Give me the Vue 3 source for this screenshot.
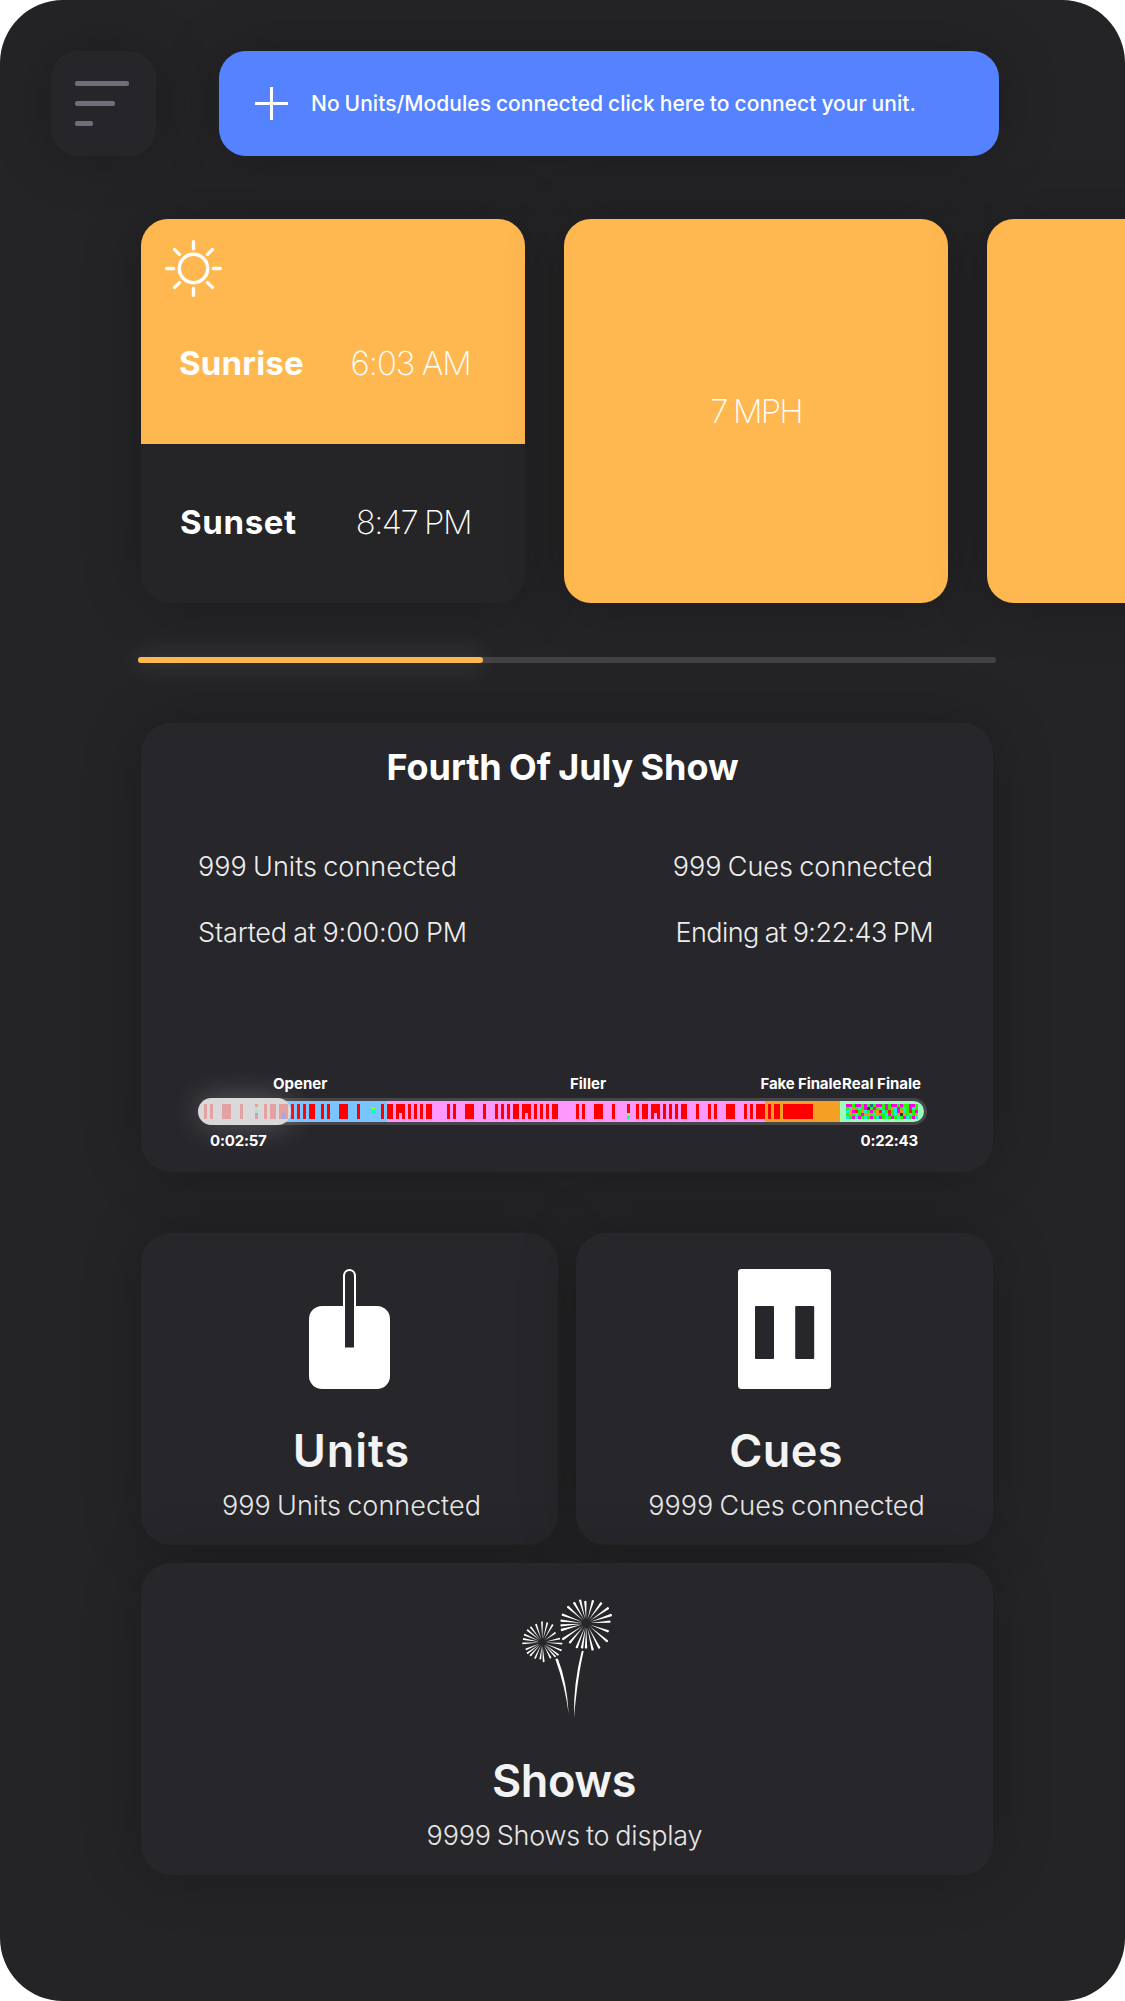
<script setup>
// x, width of each cue mark along the show timeline
const playedCues = [[6, 3], [12, 3], [24, 9], [42, 3], [66, 3], [72, 6], [81, 9]]
const cues = [
  [93, 3], [99, 3], [105, 3], [111, 6], [123, 3], [129, 3], [141, 9], [159, 3],
  [183, 3], [189, 6], [198, 9], [210, 3], [216, 3], [222, 3], [228, 6], [249, 3],
  [255, 3], [267, 9], [285, 3], [297, 3], [303, 3], [309, 3], [315, 6], [324, 9],
  [336, 3], [342, 3], [348, 3], [354, 6], [378, 3], [384, 3], [396, 9], [414, 3],
  [429, 3], [438, 3], [444, 6], [453, 9], [465, 3], [471, 3], [477, 3], [483, 6],
  [498, 3], [510, 3], [516, 3], [528, 9], [546, 3], [552, 3], [558, 9], [570, 3],
  [576, 6], [585, 30],
]

// one letter per 3px cell of the finale pattern
const finale = [
  'mmgmmgmgbgmmgmgmmgmggmmg',
  'gcogcgmpgmgcgmgocmgcgmcg',
  'comrgocgmgorcgrgcmocgrgm',
  'gogcgmoogcoggcmgcokogcgo',
  'cgmcmgcgmgcmgcgmgcgmcgmc',
]
const colors = { m: '#ff00e0', g: '#25f500', c: '#17f0d0', o: '#ff9020', r: '#f51818', b: '#256a90', p: '#7a1d55', k: '#26402a' }

// a firework ray that widens from the burst's centre to a rounded tip
const ray = (cx, cy, [x, y], inner, w) => {
  const a = Math.atan2(y - cy, x - cx)
  const sx = cx + Math.cos(a) * inner
  const sy = cy + Math.sin(a) * inner
  const nx = -Math.sin(a) * w
  const ny = Math.cos(a) * w
  return `M${sx} ${sy}L${x + nx} ${y + ny}Q${x + Math.cos(a) * w} ${y + Math.sin(a) * w} ${x - nx} ${y - ny}Z`
}
const big = [[222, 68], [240, 60], [256, 64], [279, 62], [304, 69], [325, 84], [334, 105], [330, 125], [325, 154], [322, 184], [298, 204], [278, 210], [258, 204], [246, 204], [230, 203], [209, 188], [188, 178], [184, 150], [183, 136], [183, 122], [187, 104], [203, 80]]
const small = [[126, 125], [142, 128], [158, 134], [166, 158], [179, 176], [186, 191], [184, 211], [175, 225], [166, 230], [152, 234], [131, 245], [121, 237], [105, 235], [91, 227], [82, 220], [78, 208], [68, 190], [70, 177], [73, 164], [82, 150], [92, 141], [108, 133]]
const bursts = big.map(p => ray(259, 130, p, 12, 3.6)).join('') + small.map(p => ray(127, 187, p, 10, 2.8)).join('')
</script>

<template>
  <main class="screen">
    <header class="top">
      <button class="menu" aria-label="Menu"><i></i><i></i><i></i></button>
      <div class="banner">
        <svg width="33" height="33" viewBox="0 0 33 33"><path d="M16.5 0v33M0 16.5h33" stroke="#fff" stroke-width="3" /></svg>
        <span class="banner-text">No Units/Modules connected click here to connect your unit.</span>
      </div>
    </header>

    <section class="weather">
      <article class="tile sun">
        <div class="day">
          <svg class="sun-icon" width="57" height="57" viewBox="0 0 57 57" fill="none" stroke="#fff" stroke-width="3.4" stroke-linecap="round">
            <circle cx="28.5" cy="28.5" r="14.2" />
            <path d="M28.5 1.7v7M28.5 48.3v7M1.7 28.5h7M48.3 28.5h7M9.6 9.6l4.8 4.8M42.6 42.6l4.8 4.8M9.6 47.4l4.8-4.8M42.6 14.4l4.8-4.8" />
          </svg>
          <div class="pair"><b>Sunrise</b><span>6:03 AM</span></div>
        </div>
        <div class="night pair"><b>Sunset</b><span>8:47 PM</span></div>
      </article>
      <article class="tile wind"><span>7 MPH</span></article>
      <article class="tile"></article>
    </section>

    <div class="scroll"><div class="scroll-thumb"></div></div>

    <section class="card show">
      <h2>Fourth Of July Show</h2>
      <div class="facts">
        <p><span>999 Units connected</span><span>999 Cues connected</span></p>
        <p class="clock"><span>Started at 9:00:00 PM</span><span class="ending">Ending at 9:22:43 PM</span></p>
      </div>
      <div class="labels">
        <span>Opener</span><span>Filler</span><span class="fake">Fake Finale</span><span>Real Finale</span>
      </div>
      <div class="timeline">
        <svg width="729" height="27" viewBox="0 0 729 27" shape-rendering="crispEdges">
          <rect width="729" height="27" rx="13.5" fill="#47464b" shape-rendering="auto" />
          <rect x="60" y="3" width="129" height="21" fill="#78c5ff" />
          <rect x="189" y="3" width="378" height="21" fill="#fc99fb" />
          <rect x="567" y="3" width="75" height="21" fill="#f3a024" />
          <path d="M642 3h73.5a10.5 10.5 0 0 1 0 21H642z" fill="#9dffbe" shape-rendering="auto" />
          <rect v-for="c in cues" :key="c[0]" :x="c[0]" y="6" :width="c[1]" height="15" fill="#f00" />
          <rect x="201" y="15" width="3" height="6" fill="#fc99fb" />
          <rect x="327" y="15" width="3" height="6" fill="#fc99fb" />
          <rect x="456" y="15" width="3" height="6" fill="#fc99fb" />
          <path d="M174 9h3v3h-3zM429 15h3v3h-3z" fill="#9bff00" />
          <path d="M174 12h3v3h-3zM429 18h3v3h-3z" fill="#00ffc8" />
          <template v-for="(row, y) in finale" :key="y">
            <rect v-for="(c, x) in row" :key="x" :x="648 + x * 3" :y="6 + y * 3" width="3" height="3" :fill="colors[c]" />
          </template>
        </svg>
        <div class="played">
          <svg width="93" height="27" viewBox="0 0 93 27" shape-rendering="crispEdges">
            <rect v-for="c in playedCues" :key="c[0]" :x="c[0]" y="6" :width="c[1]" height="15" fill="#e4a1a1" />
            <path d="M57 6h3v3h-3zM57 18h3v3h-3z" fill="#e4a1a1" />
            <path d="M57 9h3v3h-3z" fill="#c8e8a0" />
            <path d="M57 12h3v3h-3z" fill="#a0e4d4" />
            <path d="M57 15h3v3h-3z" fill="#c0a1e0" />
            <path d="M84 15h3v6h-3z" fill="#a1a8e4" />
          </svg>
        </div>
      </div>
      <div class="times"><span>0:02:57</span><span>0:22:43</span></div>
    </section>

    <section class="grid">
      <article class="card link units">
        <svg width="81" height="120" viewBox="0 0 81 120">
          <rect y="37" width="81" height="83" rx="13" fill="#fff" />
          <path d="M34 40V6.5a6.5 6.5 0 0 1 13 0V40z" fill="#fff" />
          <path d="M36 78.5V6.5a4.5 4.5 0 0 1 9 0v72z" fill="#27262b" />
        </svg>
        <h3>Units</h3>
        <p>999 Units connected</p>
      </article>
      <article class="card link cues">
        <svg width="93" height="120" viewBox="0 0 93 120">
          <rect width="93" height="120" rx="3.5" fill="#fff" />
          <rect x="17" y="37" width="19" height="53" rx="1" fill="#27262b" />
          <rect x="57.2" y="37" width="19" height="53" rx="1" fill="#27262b" />
        </svg>
        <h3>Cues</h3>
        <p>9999 Cues connected</p>
      </article>
      <article class="card link shows">
        <svg width="92" height="120" viewBox="63 57 276 360" fill="#fff">
          <path :d="bursts" />
          <path d="M166 237q5-3 8 0Q201 305 206 402Q196 320 166 237z" />
          <path d="M245 214q3-3 6 0Q233 290 222 412Q220 310 245 214z" />
        </svg>
        <h3>Shows</h3>
        <p>9999 Shows to display</p>
      </article>
    </section>
  </main>
</template>

<style>
body { background: #fff; }
</style>

<style scoped>
* { box-sizing: border-box; margin: 0; }
.screen { width: 1125px; height: 2001px; overflow: hidden; border-radius: 63px; background: #242426; color: #fff; font-family: Inter, sans-serif; white-space: nowrap; padding-top: 51px; }

.top { display: flex; gap: 63px; padding-left: 51px; }
.menu { width: 105px; height: 105px; border: 0; border-radius: 27px; background: #26252a; padding: 30px 24px; display: flex; flex-direction: column; gap: 15px; box-shadow: 0 0 60px rgba(0, 0, 0, .22); }
.menu i { height: 5px; border-radius: 2px; background: #6f6e7a; width: 54px; }
.menu i:nth-child(2) { width: 40px; }
.menu i:nth-child(3) { width: 18px; }
.banner { width: 780px; height: 105px; border-radius: 27px; background: #5583ff; display: flex; align-items: center; padding-left: 36px; gap: 23px; box-shadow: 0 0 60px rgba(0, 0, 0, .22); }
.banner-text { font-size: 21px; font-weight: 500; letter-spacing: .04px; word-spacing: -.7px; }

.weather { display: flex; gap: 39px; padding-left: 141px; margin-top: 63px; }
.tile { flex: none; width: 384px; height: 384px; border-radius: 27px; overflow: hidden; background: #ffb850; box-shadow: 0 0 60px rgba(0, 0, 0, .22); }
.sun { background: #252527; }
.day { height: 225px; background: #ffb850; padding-top: 21px; }
.sun-icon { display: block; margin-left: 24px; }
.pair { display: flex; justify-content: space-between; padding: 0 54px 0 38px; font-size: 33px; line-height: 40px; font-weight: 200; }
.day .pair { margin-top: 46px; }
.pair b { font-weight: 700; letter-spacing: .2px; }
.pair span { letter-spacing: -1px; word-spacing: -1px; }
.night { padding: 58px 54px 0 39px; }
.night b { letter-spacing: .65px; }
.night span { letter-spacing: -1.5px; word-spacing: -1px; }
.wind { display: flex; align-items: center; justify-content: center; font-size: 33px; font-weight: 200; letter-spacing: -1.9px; word-spacing: -1px; }

.scroll { margin: 54px 0 0 138px; width: 858px; height: 6px; border-radius: 3px; background: #424145; }
.scroll-thumb { width: 345px; height: 6px; border-radius: 3px; background: #ffb850; box-shadow: 0 0 24px rgba(255, 255, 255, .25); }

.card { border-radius: 30px; background: #27262b; box-shadow: 0 0 60px rgba(0, 0, 0, .22); }
.show { width: 852px; height: 449px; margin: 60px 0 0 141px; padding-top: 24px; display: flex; flex-direction: column; }
h2 { padding-right: 9px; font-size: 36px; line-height: 40px; font-weight: 700; letter-spacing: -.1px; word-spacing: -1px; text-align: center; }
.facts { padding: 63px 60px 0 57px; font-size: 27px; line-height: 34px; font-weight: 300; letter-spacing: .05px; word-spacing: -1.5px; color: #eee; display: flex; flex-direction: column; gap: 32px; }
.facts p { display: flex; justify-content: space-between; }
.clock { letter-spacing: -.15px; word-spacing: -1px; }
.ending { letter-spacing: -.55px; word-spacing: -1px; }
.labels { display: grid; grid-template-columns: 297px 190.5px 81.5px auto; margin-top: 124px; padding-left: 132px; font-size: 15px; line-height: 20px; font-weight: 700; }
.fake { letter-spacing: -.12px; }
.timeline { position: relative; margin: 4px 0 0 57px; height: 27px; }
.timeline svg { display: block; }
.played { position: absolute; left: 0; top: 0; width: 93px; height: 27px; border-radius: 14px; background: #d9d9d9; box-shadow: 0 0 30px rgba(255, 255, 255, .25); }
.times { display: flex; justify-content: space-between; padding: 6px 75px 0 69px; font-size: 15px; line-height: 20px; font-weight: 700; letter-spacing: -.2px; }

.grid { display: grid; grid-template-columns: 417px 417px; gap: 18px; margin: 61px 0 0 141px; }
.link { height: 312px; padding-top: 36px; display: flex; flex-direction: column; align-items: center; }
h3 { margin-top: 37px; font-size: 45px; line-height: 50px; font-weight: 600; color: #f3f3f3; }
.link p { margin-top: 13px; font-size: 27px; line-height: 34px; font-weight: 300; letter-spacing: .05px; word-spacing: -1.5px; color: #e6e6e6; }
.units h3 { letter-spacing: 1px; padding-left: 4px; }
.units p { padding-left: 4px; }
.cues h3 { letter-spacing: .4px; padding-left: 3px; }
.cues p { padding-left: 4px; }
.shows { grid-column: span 2; }
.shows h3 { letter-spacing: -.4px; padding-right: 6px; }
.shows p { letter-spacing: -.2px; padding-right: 5px; }
</style>
